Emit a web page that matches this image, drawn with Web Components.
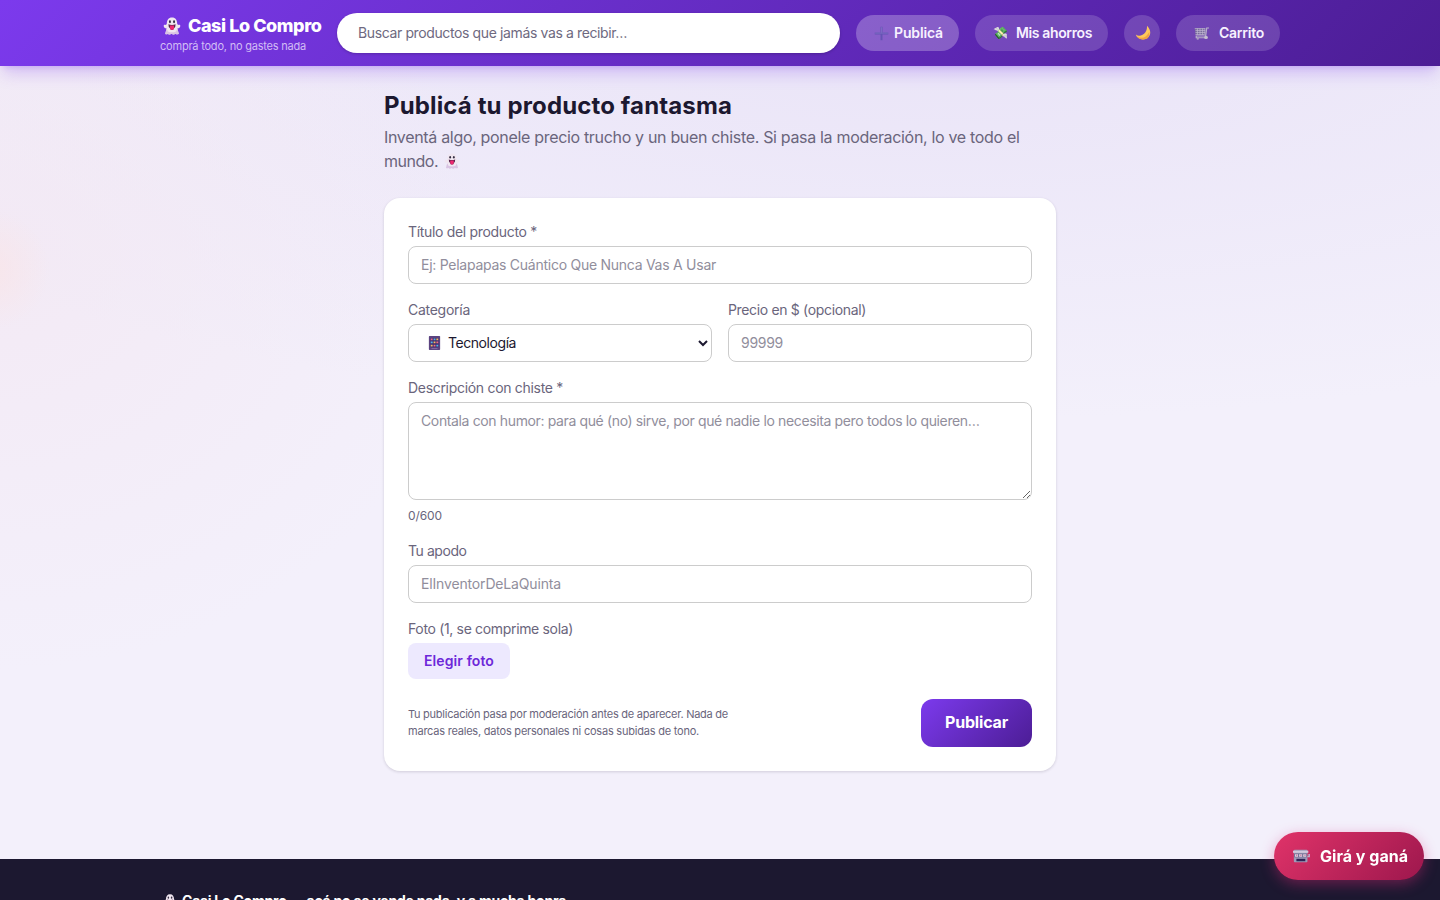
<!DOCTYPE html>
<html lang="es">
<head>
<meta charset="utf-8">
<title>Casi Lo Compro</title>
<style>
html,body{margin:0;height:100%;overflow:hidden}
body{font-family:Inter,"Liberation Sans",sans-serif;color:#1c1830;background:#f3f0fb}
</style>
</head>
<body>
<shop-page></shop-page>
<script>
const pen=document.createElement('canvas').getContext('2d');
// Spreads a text over a given width by adjusting its tracking.
function track(el,text,width){
  const c=getComputedStyle(el);
  pen.font=`${c.fontWeight} ${c.fontSize} ${c.fontFamily}`;
  el.style.letterSpacing=((width-pen.measureText(text).width)/text.length).toFixed(3)+'px';
}
function define(name,html,setup){
  const t=document.createElement('template');t.innerHTML=html;
  customElements.define(name,class extends HTMLElement{
    connectedCallback(){
      if(this.shadowRoot)return;
      this.attachShadow({mode:'open'}).append(t.content.cloneNode(true));
      if(setup)setup.call(this,this.shadowRoot);
    }
  });
}
const icons={
ghost:'<path d="M10 .5C6 .5 4.300 3.500 4.200 7.500L3.300 9C1.500 8 .6 9 .8 10.300 1.200 12 2.500 12.800 4 12.800L2.500 18.500Q3.500 19.800 5.500 18.500 7 20.500 9.500 18.700 11.500 20.500 13.500 18.500 16 19.800 17.500 18.500L16 12.800C17.500 12.800 18.800 12 19.200 10.300 19.400 9 18.500 8 16.700 9L15.800 7.500C15.700 3.500 14 .5 10 .5Z" fill="#f0e6f0"/><path d="M4 12.800 2.500 18.500Q3.500 19.800 5.500 18.500 7 20.500 9.500 18.700 11.500 20.500 13.500 18.500 16 19.800 17.500 18.500L16 12.800 14.500 16Q10 18 5.500 16Z" fill="#d9c3e3"/><ellipse cx="7.700" cy="5.300" rx="1.100" ry="1.600" fill="#352d42"/><ellipse cx="12.300" cy="5.300" rx="1.100" ry="1.600" fill="#352d42"/><path d="M6 8Q10 9.500 14 8 14 11 12.500 12.200 12 14.500 10 14.500 8 14.500 7.500 12.200 6 11 6 8Z" fill="#57234c"/><path d="M7.800 9.500H12.200V12.500Q12 14.500 10 14.500 8 14.500 7.800 12.500Z" fill="#ef2870"/>',
plus:'<path d="M10 1V19M1 10H19" stroke="#6553b4" stroke-width="2.600"/><path d="M10 1.500V9M1.500 9.500H18.500" stroke="#8a7bcd" stroke-width=".8"/>',
moon:'<path d="M15 1C23 9 18 18 10 18 5 18 2 16 1 12 5 15 10 13 13 9 15 6 15 4 15 1Z" fill="#ffc85b"/><path d="M3 14Q12 20 18 8 19 18 10 18 5 18 3 14" fill="#f2a442"/>',
cart:'<path d="M1 2H15V12H2Z" fill="#75699a"/><path d="M1 2.500H15M2 5.500H15M2 8.500H15M2 11.500H14M4.500 2V12M8 2V12M11.500 2V12M14.500 2V12" stroke="#c1b9d3" stroke-width="1"/><path d="M20 1.500H17L15.500 14H3V16.500H15" fill="none" stroke="#b8b1c8" stroke-width="1.600"/><circle cx="5" cy="18" r="1.600" fill="#a9a0bc"/><circle cx="16" cy="16" r="2.500" fill="#c7c0d0"/>',
phone:'<rect x="2.500" width="15" height="20" rx="1" fill="#5b4380"/><rect x="4.500" y="3" width="11" height="13" fill="#3d2c6e"/><path d="M5 3.500h2.500V6H5zm7.500 4.500H15v2.500h-2.500zm-3.700 4.500h2.500V15H8.800z" fill="#f16d83"/><path d="M8.800 3.500h2.500V6H8.800zM5 8h2.500v2.500H5zm7.500 4.500H15V15h-2.500z" fill="#55b7e5"/><path d="M12.500 3.500H15V6h-2.500zM8.800 8h2.500v2.500H8.800zM5 12.500h2.500V15H5z" fill="#f2bd61"/><path d="M6 18h8" stroke="#9b78b2"/>',
slot:'<rect x="1" y="1" width="16" height="18" rx="1" fill="#9f9bb8"/><path d="M0 2.500H18V5.500H0Z" fill="#d0c9dc"/><rect x="1.500" y="6.500" width="15" height="5.500" fill="#6c668d"/><path d="M2.500 7.500h3.500v3.500H2.500zm4.800 0h3.500v3.500H7.300zm4.800 0h3.500v3.500h-3.500z" fill="#e9e2ef"/><path d="M4 8h1v2.500H4zm4.800 0h1v2.500h-1zm4.800 0h1v2.500h-1z" fill="#b04a78"/><path d="M4 14h10.500v3.500H4z" fill="#2e2356"/><path d="M17 11h2V7" stroke="#bbb4ce" stroke-width="1.800" fill="none"/>'};
define('shop-icon','<style>:host{display:block;flex:none}svg{display:block;width:100%;height:100%}</style>',function(r){
  r.append(document.createRange().createContextualFragment(`<svg viewBox="0 0 20 20" preserveAspectRatio="none" aria-hidden="true">${icons[this.getAttribute('name')]}</svg>`));
});
define('tracked-text','<style>:host{display:block;white-space:nowrap}</style><slot></slot>',function(){
  track(this,this.textContent,+this.getAttribute('width'));
});
define('nav-pill',`<style>:host{display:flex;box-sizing:border-box;align-items:center;height:36px;padding:0 16px 0 18px;justify-content:space-between;border-radius:18px;background:rgba(255,255,255,.16);color:#f7f2ff;font-size:14px;line-height:20px;font-weight:600;flex:none}:host([active]){background:rgba(255,255,255,.26)}:host([round]){padding:0 0 0 1px;justify-content:center}</style><slot></slot>`);
define('shop-header',`<style>
:host{display:block;position:relative;z-index:2;flex:none;height:66px;background:linear-gradient(135deg,#7c3aed,#4c1d95);box-shadow:0 10px 15px -3px rgba(124,58,237,.25),0 4px 6px -4px rgba(124,58,237,.25)}
.bar{width:1120px;height:66px;margin:auto;display:flex;align-items:center}
.brand{width:177px;flex:none;padding-top:2px}.name{display:flex;align-items:center;height:22px;color:#fff;font-weight:800;font-size:18px;line-height:22px}
.name shop-icon{width:18px;height:18px;margin:0 7px 0 3px}.tag{font-size:11px;line-height:16px;margin-top:1px;color:#d2bdf5}
input{box-sizing:border-box;width:503px;height:40px;border:0;border-radius:20px;padding:0 21px 1px;font:14px Inter,sans-serif;background:#fff;box-shadow:0 1px 3px #0003;margin:0}
input::placeholder{color:#6e6980;opacity:1}
nav{display:flex;gap:16px;margin-left:16px}
.money{font:12px/20px "Noto Color Emoji",sans-serif;width:15px}
</style><div class="bar"><div class="brand"><div class="name"><shop-icon name="ghost"></shop-icon><tracked-text width="133.500">Casi Lo Compro</tracked-text></div><tracked-text class="tag" width="146">comprá todo, no gastes nada</tracked-text></div>
<input placeholder="Buscar productos que jamás vas a recibir…"><nav>
<nav-pill active style="width:103px"><shop-icon name="plus" style="width:15px;height:15px"></shop-icon><tracked-text width="49">Publicá</tracked-text></nav-pill>
<nav-pill style="width:133px"><span class="money">💸</span><tracked-text width="76">Mis ahorros</tracked-text></nav-pill>
<nav-pill round style="width:36px"><shop-icon name="moon" style="width:16px;height:16px"></shop-icon></nav-pill>
<nav-pill style="width:104px"><shop-icon name="cart" style="width:15px;height:13px"></shop-icon><tracked-text width="45">Carrito</tracked-text></nav-pill></nav></div>`,r=>{const i=r.querySelector('input');track(i,i.placeholder,269)});
define('form-field',`<style>:host{display:block;min-width:0}.label{height:20px;font-size:14px;line-height:20px;color:#6a657c;margin-bottom:4px}</style><tracked-text class="label"></tracked-text><slot></slot>`,function(r){
  const l=r.querySelector('.label');l.textContent=this.getAttribute('label');track(l,l.textContent,+this.getAttribute('width'));
});
define('product-form',`<style>
:host{display:flex;flex-direction:column;gap:16px;box-sizing:border-box;height:573px;padding:24px;background:#fff;border-radius:16px;box-shadow:0 1px 3px rgba(28,24,48,.16)}
input,textarea,select{display:block;box-sizing:border-box;width:100%;margin:0;height:38px;border:1px solid #ccc;border-radius:8px;background:#fff;padding:0 12px 1px;color:#1c1830;font:14px/20px Inter,sans-serif;outline:0}
textarea{height:98px;padding:8px 12px;resize:vertical}
::placeholder{color:#918e9c;opacity:1}
.pair{display:grid;grid-template-columns:1fr 1fr;gap:16px}
.pick{position:relative}.pick shop-icon{position:absolute;left:19px;top:12px;width:15px;height:14px}select{padding:0 0 1px 35px}
.count{font-size:12px;line-height:16px;padding-bottom:1px;color:#6a657c;margin-top:8px}
.choose{box-sizing:border-box;width:102px;height:36px;padding:8px 16px;border-radius:8px;background:#ede9fe;color:#6d28d9;font-weight:600;font-size:14px;line-height:20px}
.end{display:flex;justify-content:space-between;align-items:center;margin-top:4px}.note{font-size:11px;line-height:17px;color:#6a657c}
.send{box-sizing:border-box;width:111px;height:48px;padding:11px 24px;border-radius:12px;background:linear-gradient(135deg,#7c3aed,#4c1d95);color:#fff;font-weight:700;font-size:16px;line-height:24px}
</style>
<form-field label="Título del producto *" width="129"><input data-w="295" placeholder="Ej: Pelapapas Cuántico Que Nunca Vas A Usar"></form-field>
<div class="pair"><form-field label="Categoría" width="62"><div class="pick"><select><option>Tecnología</option></select><shop-icon name="phone"></shop-icon></div></form-field><form-field label="Precio en $ (opcional)" width="138"><input data-w="42" placeholder="99999"></form-field></div>
<form-field label="Descripción con chiste *" width="155"><textarea data-w="558.500" placeholder="Contala con humor: para qué (no) sirve, por qué nadie lo necesita pero todos lo quieren…"></textarea><tracked-text class="count" width="34">0/600</tracked-text></form-field>
<form-field label="Tu apodo" width="58.500"><input data-w="140" placeholder="ElInventorDeLaQuinta"></form-field>
<form-field label="Foto (1, se comprime sola)" width="165"><div class="choose"><tracked-text width="70">Elegir foto</tracked-text></div></form-field>
<div class="end"><div class="note"><tracked-text width="320">Tu publicación pasa por moderación antes de aparecer. Nada de</tracked-text><tracked-text width="291">marcas reales, datos personales ni cosas subidas de tono.</tracked-text></div><div class="send"><tracked-text width="63">Publicar</tracked-text></div></div>`,r=>{
  r.querySelectorAll('[data-w]').forEach(e=>track(e,e.placeholder,+e.dataset.w));track(r.querySelector('select'),'Tecnología',68);
});
define('shop-footer',`<style>:host{display:block;box-sizing:border-box;flex:none;height:120px;padding-top:32px;background:#1c1830;color:#fff}.in{width:1120px;margin:auto;display:flex;align-items:center;font-size:14px;font-weight:700;line-height:20px}shop-icon{width:14px;height:14px;margin:0 5px 0 3px}</style><div class="in"><shop-icon name="ghost"></shop-icon><tracked-text width="389">Casi Lo Compro — acá no se vende nada, y a mucha honra.</tracked-text></div>`);
define('spin-button',`<style>:host{position:fixed;z-index:3;right:16px;bottom:20px;box-sizing:border-box;width:150px;height:48px;border-radius:24px;display:flex;align-items:center;justify-content:space-between;padding:0 16px 1px 19px;background:linear-gradient(135deg,#e03369,#9d174d);box-shadow:0 4px 14px rgba(219,39,119,.4);color:#fff;font-weight:700;font-size:16px;line-height:24px}shop-icon{width:17px;height:14px}</style><shop-icon name="slot"></shop-icon><tracked-text width="88">Girá y ganá</tracked-text>`);
define('shop-page',`<style>
:host{display:flex;flex-direction:column;height:900px;overflow:hidden;background:radial-gradient(circle 60px at -10px 270px,rgba(250,228,230,.7),transparent),radial-gradient(ellipse 480px 420px at 0 250px,rgba(243,232,243,.8),transparent),radial-gradient(ellipse 1300px 420px at 65% 0,#e9e3f7,transparent),#f3f0fb}
main{box-sizing:border-box;flex:none;width:672px;height:793px;padding-top:24px;margin:0 auto}
h1{margin:0 0 4px;font-size:24px;line-height:32px;font-weight:700}.intro{font-size:16px;line-height:24px;color:#6a657c;margin:-1px 0 25px}.second{display:flex;align-items:center}.second shop-icon{width:16px;height:16px;margin-left:6px}
</style><shop-header></shop-header><main><h1><tracked-text width="348">Publicá tu producto fantasma</tracked-text></h1><div class="intro"><tracked-text width="635.500">Inventá algo, ponele precio trucho y un buen chiste. Si pasa la moderación, lo ve todo el</tracked-text><div class="second"><tracked-text width="54">mundo.</tracked-text><shop-icon name="ghost"></shop-icon></div></div><product-form></product-form></main><shop-footer></shop-footer><spin-button></spin-button>`);
</script>
</body>
</html>
